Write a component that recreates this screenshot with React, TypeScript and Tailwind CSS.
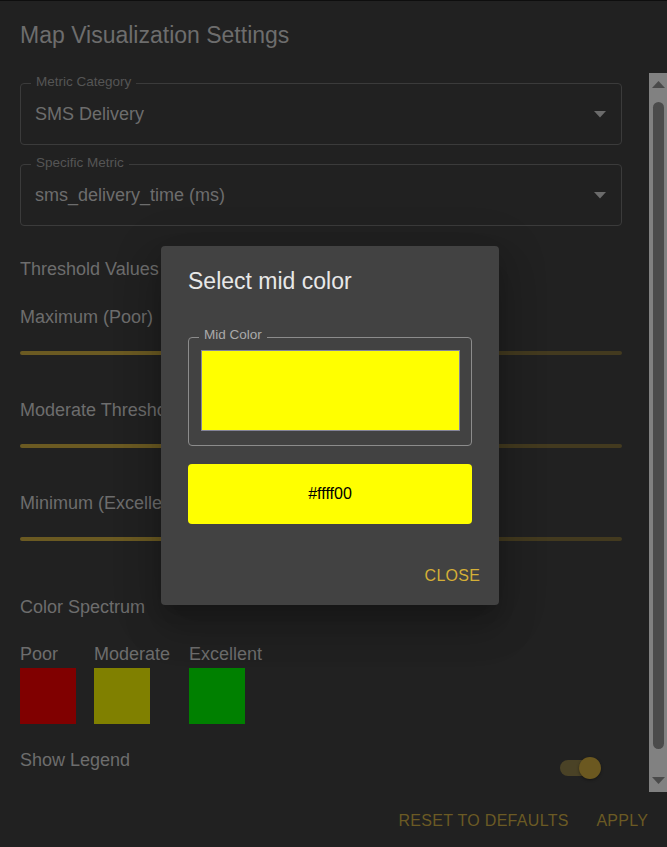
import React from "react";

const font = { fontFamily: '"Liberation Sans", Arial, sans-serif' };

function SelectField({ label, value }: { label: string; value: string }) {
  return (
    <div className="relative h-[62px] w-[602px] rounded-[4px] border border-[#3b3b3b] flex items-center pl-[14px] pr-[15px]">
      <span className="absolute left-[10px] top-[-9px] px-[5px] bg-[#212121] text-[13.5px] leading-[14px] text-[#555555]">
        {label}
      </span>
      <span className="flex-1 text-[18px] leading-[22px] text-[#6d6d6d]">{value}</span>
      <svg width="12" height="7" viewBox="0 0 12 7" className="mt-[1px]">
        <polygon points="0,0 12,0 6,6.5" fill="#6b6b6b" />
      </svg>
    </div>
  );
}

function Slider() {
  return (
    <div className="flex h-[4px] w-[602px]">
      <div className="h-[4px] w-[310px] rounded-l-full bg-[#6b5a22]" />
      <div className="h-[4px] flex-1 rounded-r-full bg-[#433a1f]" />
    </div>
  );
}

export default function App() {
  return (
    <div
      className="relative h-[847px] w-[667px] overflow-hidden border-t border-[#0e0e0e] bg-[#212121]"
      style={font}
    >
      <div className="pl-[20px] pt-[20px] text-[23px] leading-[28px] text-[#6d6d6d]">
        Map Visualization Settings
      </div>

      <div className="mt-[24px] flex h-[719px]">
        <div className="ml-[20px] w-[602px] overflow-hidden">
          <div className="mt-[10px]">
            <SelectField label="Metric Category" value="SMS Delivery" />
          </div>
          <div className="mt-[19px]">
            <SelectField label="Specific Metric" value="sms_delivery_time (ms)" />
          </div>

          <div className="mt-[32px] text-[18px] leading-[22px] text-[#6d6d6d]">Threshold Values</div>

          <div className="mt-[26px] text-[18px] leading-[22px] text-[#6d6d6d]">Maximum (Poor)</div>
          <div className="mt-[23px]">
            <Slider />
          </div>

          <div className="mt-[44px] text-[18px] leading-[22px] text-[#6d6d6d]">Moderate Threshold</div>
          <div className="mt-[23px]">
            <Slider />
          </div>

          <div className="mt-[44px] text-[18px] leading-[22px] text-[#6d6d6d]">Minimum (Excellent)</div>
          <div className="mt-[23px]">
            <Slider />
          </div>

          <div className="mt-[55px] text-[18px] leading-[22px] text-[#6d6d6d]">Color Spectrum</div>

          <div className="mt-[25px] flex text-[18px] leading-[22px] text-[#6d6d6d]">
            <div className="flex w-[74px] flex-col">
              <span>Poor</span>
              <div className="mt-[3px] h-[56px] w-[56px] bg-[#800000]" />
            </div>
            <div className="flex w-[95px] flex-col">
              <span>Moderate</span>
              <div className="mt-[3px] h-[56px] w-[56px] bg-[#808000]" />
            </div>
            <div className="flex flex-col">
              <span>Excellent</span>
              <div className="mt-[3px] h-[56px] w-[56px] bg-[#008000]" />
            </div>
          </div>

          <div className="mt-[25px] flex items-start justify-between">
            <span className="text-[18px] leading-[22px] text-[#6d6d6d]">Show Legend</span>
            <div className="relative mr-[24px] mt-[11px] h-[16px] w-[38px] rounded-full bg-[#4a4226]">
              <div className="absolute right-[-3px] top-[-3px] h-[22px] w-[22px] rounded-full bg-[#6b5820] shadow-[0_1px_3px_rgba(0,0,0,0.4)]" />
            </div>
          </div>
        </div>

        <div className="ml-[27px] flex h-full w-[18px] flex-col items-center bg-[#818181]">
          <svg width="13" height="7" viewBox="0 0 13 7" className="mt-[8px]">
            <polygon points="6.5,0 13,7 0,7" fill="#4a4a4a" />
          </svg>
          <div className="mt-[14px] h-[647px] w-[11px] rounded-full bg-[#4b4b4b]" />
          <svg width="13" height="7" viewBox="0 0 13 7" className="mt-[28px]">
            <polygon points="0,0 13,0 6.5,7" fill="#4a4a4a" />
          </svg>
        </div>
      </div>

      <div className="flex justify-end gap-[28px] pr-[19px] pt-[19px] text-[16px] leading-[20px] tracking-[0.3px] text-[#6b5a24]">
        <span className="-mr-[0.3px]">RESET TO DEFAULTS</span>
        <span className="-mr-[0.3px]">APPLY</span>
      </div>

      <div className="absolute left-[161px] top-[245px] flex h-[359px] w-[338px] flex-col rounded-[4px] bg-[#424242] pl-[27px] pr-[19px] shadow-[0px_11px_15px_-7px_rgba(0,0,0,0.2),0px_24px_38px_3px_rgba(0,0,0,0.14),0px_9px_46px_8px_rgba(0,0,0,0.12)]">
        <div className="pt-[21px] text-[23px] leading-[28px] text-[#e8e8e8]">Select mid color</div>
        <div className="relative mt-[42px] h-[109px] w-[284px] rounded-[4px] border border-[#8c8c8c] pl-[12px] pt-[12px]">
          <span className="absolute left-[10px] top-[-10px] bg-[#424242] px-[5px] text-[13.5px] leading-[14px] text-[#aaaaaa]">
            Mid Color
          </span>
          <div className="h-[81px] w-[259px] border border-[#85859a] bg-[#ffff00]" />
        </div>
        <div className="mt-[18px] flex h-[60px] w-[284px] items-center justify-center rounded-[4px] bg-[#ffff00] text-[16px] text-black">
          #ffff00
        </div>
        <div className="mt-[42px] -mr-[0.3px] text-right text-[16px] leading-[20px] tracking-[0.3px] text-[#d4af37]">CLOSE</div>
      </div>
    </div>
  );
}
